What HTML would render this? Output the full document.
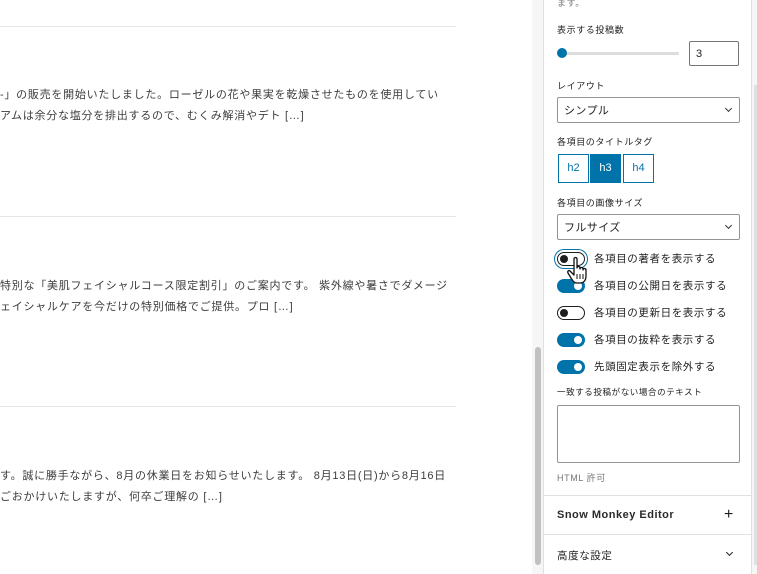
<!DOCTYPE html>
<html><head><meta charset="utf-8"><style>
*{margin:0;padding:0;box-sizing:border-box}
body{width:757px;height:574px;overflow:hidden;background:#fff;font-family:"Liberation Sans","Noto Sans CJK JP",sans-serif;position:relative;color:#1e1e1e}
.hr{position:absolute;left:0;width:456px;height:1px;background:#e6e6e6}
.t{position:absolute;left:0;font-size:11px;color:#3c3c3c;letter-spacing:.75px;white-space:nowrap}
.strip{position:absolute;left:532px;top:0;width:11px;height:574px;background:#f6f6f6}
.thumb{position:absolute;left:535px;top:347px;width:6px;height:218px;background:#c1c1c1;border-radius:3px}
.side{position:absolute;left:543px;top:0;width:209px;height:574px;background:#fff;border-left:1px solid #e0e0e0;border-right:1px solid #e0e0e0}
.rs{position:absolute;left:752px;top:0;width:5px;height:574px;background:#f6f6f6}
.rs i{position:absolute;left:2px;top:85px;width:3px;height:480px;background:#e0e0e0}
.lab{position:absolute;left:13px;font-size:9px;color:#1e1e1e;letter-spacing:.6px}
.sel{position:absolute;left:13px;width:183px;height:26px;border:1px solid #949494;border-radius:2px;font-size:11px;padding:4px 0 0 6px;letter-spacing:.4px}
.sel:after{content:"";position:absolute;right:8px;top:8px;width:4px;height:4px;border-right:1px solid #333;border-bottom:1px solid #333;transform:rotate(45deg)}
.tg{position:absolute;top:154px;width:31px;height:29px;border:1px solid #0073aa;font-size:11px;color:#0073aa;text-align:center;line-height:27px}
.sw{position:absolute;left:13px;width:28px;height:14px;border-radius:7px;background:#0073aa}
.sw:after{content:"";position:absolute;right:3px;top:3px;width:8px;height:8px;border-radius:50%;background:#fff}
.sw.off{background:#fff;border:1px solid #1e1e1e}
.sw.off:after{left:2px;top:2px;background:#1e1e1e}
.sl{position:absolute;left:50px;font-size:10.5px;letter-spacing:.6px}
.sep{position:absolute;left:0;width:207px;height:1px;background:#e0e0e0}
</style></head><body>
<div class="hr" style="top:26px"></div>
<div class="t" style="top:86px">-」の販売を開始いたしました。ローゼルの花や果実を乾燥させたものを使用してい</div>
<div class="t" style="top:107px">アムは余分な塩分を排出するので、むくみ解消やデト […]</div>
<div class="hr" style="top:216px"></div>
<div class="t" style="top:277px">特別な「美肌フェイシャルコース限定割引」のご案内です。 紫外線や暑さでダメージ</div>
<div class="t" style="top:298px">ェイシャルケアを今だけの特別価格でご提供。プロ […]</div>
<div class="hr" style="top:406px"></div>
<div class="t" style="top:467px">す。誠に勝手ながら、8月の休業日をお知らせいたします。 8月13日(日)から8月16日</div>
<div class="t" style="top:488px">ごおかけいたしますが、何卒ご理解の […]</div>
<div class="strip"></div><div class="thumb"></div>
<div class="side">
<div class="lab" style="top:-4px;color:#757575">ます。</div>
<div class="lab" style="top:23px">表示する投稿数</div>
<div style="position:absolute;left:17px;top:52px;width:118px;height:3px;background:#ddd;border-radius:2px"></div>
<div style="position:absolute;left:13px;top:48px;width:10px;height:10px;border-radius:50%;background:#0073aa"></div>
<div style="position:absolute;left:145px;top:41px;width:50px;height:25px;border:1px solid #757575;border-radius:2px;font-size:11px;padding:6px 0 0 6px">3</div>
<div class="lab" style="top:79px">レイアウト</div>
<div class="sel" style="top:97px">シンプル</div>
<div class="lab" style="top:135px">各項目のタイトルタグ</div>
<div class="tg" style="left:14px">h2</div>
<div class="tg" style="left:46px;background:#0073aa;color:#fff">h3</div>
<div class="tg" style="left:79px">h4</div>
<div class="lab" style="top:196px">各項目の画像サイズ</div>
<div class="sel" style="top:214px">フルサイズ</div>
<div class="sw off" style="top:252px;box-shadow:0 0 0 2px #fff,0 0 0 3px #0073aa"></div><div class="sl" style="top:251px">各項目の著者を表示する</div>
<div class="sw" style="top:279px"></div><div class="sl" style="top:278px">各項目の公開日を表示する</div>
<div class="sw off" style="top:306px"></div><div class="sl" style="top:305px">各項目の更新日を表示する</div>
<div class="sw" style="top:333px"></div><div class="sl" style="top:332px">各項目の抜粋を表示する</div>
<div class="sw" style="top:360px"></div><div class="sl" style="top:359px">先頭固定表示を除外する</div>
<div class="lab" style="top:386px;font-size:8.5px">一致する投稿がない場合のテキスト</div>
<div style="position:absolute;left:13px;top:405px;width:183px;height:58px;border:1px solid #949494;border-radius:2px"></div>
<div class="lab" style="top:471px;color:#757575">HTML 許可</div>
<div class="sep" style="top:495px"></div>
<div style="position:absolute;left:13px;top:509px;font-size:11px;font-weight:bold;letter-spacing:.5px;color:#2a2a2a">Snow Monkey Editor</div>
<div style="position:absolute;left:180px;top:506px;font-size:16px">+</div>
<div class="sep" style="top:534px"></div>
<div style="position:absolute;left:13px;top:548px;font-size:10.5px;letter-spacing:.6px">高度な設定</div>
<div style="position:absolute;left:183px;top:550px;width:5px;height:5px;border-right:1.3px solid #1e1e1e;border-bottom:1.3px solid #1e1e1e;transform:rotate(45deg)"></div>
<svg style="position:absolute;left:22px;top:256px" width="26" height="28" viewBox="0 0 26 28"><path d="M8 3c0-2 3-2 3 0v9c0-2 3-2 3 0v1c0-2 3-2 3 0v1c0-2 3-2 3 0v6c0 4-2 7-6 7h-3c-3 0-4-2-6-5l-3-5c-1-2 1-3 2-2l4 4z" fill="#fff" stroke="#111" stroke-width="1.3" stroke-linejoin="round"/><path d="M11 18v5M14 18v5M17 18v5" stroke="#111" stroke-width="1"/></svg>
</div>
<div class="rs"><i></i></div>
</body></html>
